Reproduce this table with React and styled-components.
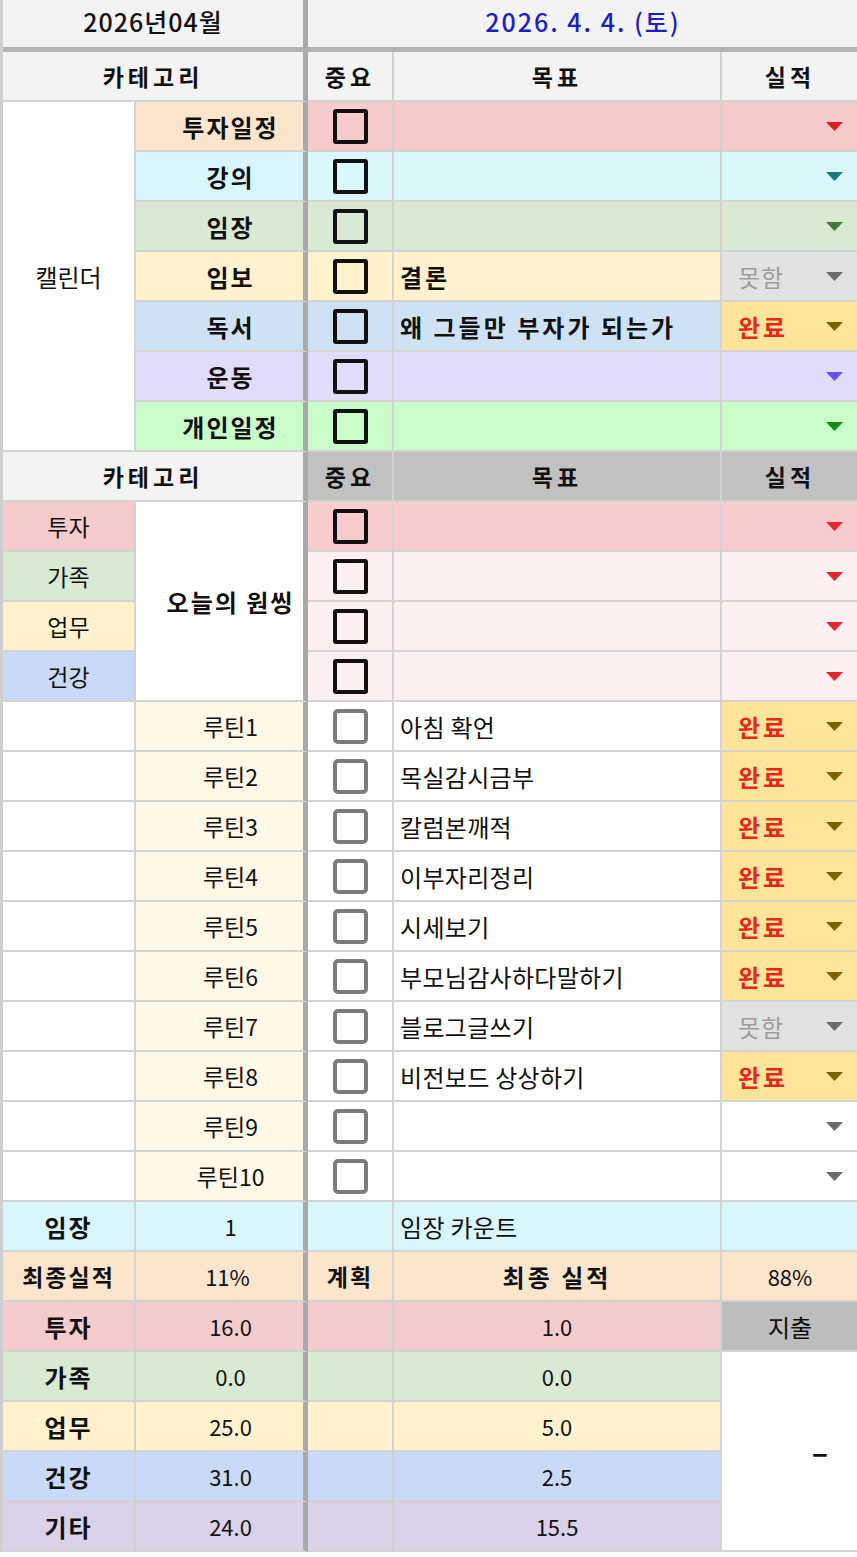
import React from "react";
import styled, { createGlobalStyle } from "styled-components";

const GlobalStyle = createGlobalStyle`
  body {
    margin: 0;
    background: #fff;
    font-family: "Noto Sans CJK KR", "Noto Sans", sans-serif;
    color: #111;
  }
`;

const LINE = "#d3d3d3";
const THICK = "#a9a9a9";

const Sheet = styled.div`
  display: grid;
  grid-template-columns: 133px 172px 86px 328px 138px;
  grid-template-rows: 52px;
  grid-auto-rows: 50px;
  width: 857px;
  border-left: 3px solid #cfcfcf;
  box-sizing: border-box;
  overflow: hidden;
`;

const Cell = styled.div`
  grid-column: span ${(p) => p.$cols || 1};
  grid-row: span ${(p) => p.$rows || 1};
  display: flex;
  align-items: center;
  justify-content: ${(p) =>
    p.$align === "left" ? "flex-start" : p.$align === "right" ? "flex-end" : "center"};
  box-sizing: border-box;
  min-width: 0;
  background: ${(p) => p.$bg || "#fff"};
  border-right: ${(p) => (p.$thick ? `5px solid ${THICK}` : `2px solid ${LINE}`)};
  border-bottom: 2px solid ${LINE};
  font-size: 23px;
  font-weight: ${(p) => (p.$bold ? 700 : 400)};
  letter-spacing: ${(p) => (p.$bold ? "2px" : "0")};
  color: ${(p) => p.$color || "#111"};
  white-space: nowrap;
  overflow: hidden;
`;

const TopCell = styled(Cell)`
  border-bottom: 5px solid #b3b3b3;
  padding-bottom: 6px;
  font-weight: 500;
  font-size: 25px;
  letter-spacing: 1px;
`;

const HeadCell = styled(Cell)`
  background: ${(p) => (p.$dark ? "#c1c1c1" : "#f3f3f3")};
  font-weight: 700;
  letter-spacing: 4px;
`;

const LabelCell = styled(Cell)`
  padding-left: 22px;
  font-size: ${(p) => (p.$bold ? "24px" : "23px")};
`;

const TextCell = styled(Cell)`
  justify-content: flex-start;
  padding-left: 6px;
  font-size: 24px;
  letter-spacing: ${(p) => (p.$bold ? "3px" : "0.3px")};
`;

const NumCell = styled(Cell)`
  font-size: 22px;
  padding-left: ${(p) => p.$shift || 0}px;
`;

const StatusCell = styled(Cell)`
  justify-content: space-between;
  padding: 0 15px 0 16px;
`;

const StatusText = styled.span`
  font-size: 24px;
  font-weight: ${(p) => (p.$done ? 700 : 400)};
  letter-spacing: ${(p) => (p.$done ? "3px" : "1px")};
  color: ${(p) => (p.$done ? "#e8261c" : "#9d9d9d")};
`;

const Box = styled.span`
  width: 35px;
  height: 35px;
  box-sizing: border-box;
  border: ${(p) => (p.$soft ? "4px solid #7b7b7b" : "4px solid #111")};
  border-radius: ${(p) => (p.$soft ? "5px" : "3px")};
`;

const DateText = styled.span`
  color: #1d1dc6;
  letter-spacing: 2px;
`;

const Dash = styled.span`
  font-size: 30px;
  font-weight: 700;
`;

const Arrow = ({ color }) => (
  <svg width="17" height="9" viewBox="0 0 17 9" style={{ marginLeft: "auto" }}>
    <polygon points="0,0 17,0 8.5,9" fill={color} />
  </svg>
);

const Status = ({ bg, text, arrow }) => (
  <StatusCell $bg={bg}>
    {text ? <StatusText $done={text === "완료"}>{text}</StatusText> : <span />}
    <Arrow color={arrow} />
  </StatusCell>
);

const calendar = [
  { label: "투자일정", labelBg: "#fce5cd", bg: "#f8cbcb", arrow: "#e21c1c" },
  { label: "강의", labelBg: "#d8f6fb", bg: "#daf8fc", arrow: "#167a80" },
  { label: "임장", labelBg: "#d9ead3", bg: "#d9ead3", arrow: "#44793a" },
  { label: "임보", labelBg: "#fff2cc", bg: "#fff2cc", goal: "결론", status: "못함" },
  { label: "독서", labelBg: "#cfe2f3", bg: "#cfe2f3", goal: "왜 그들만 부자가 되는가", status: "완료" },
  { label: "운동", labelBg: "#e2dcfb", bg: "#e2dcfb", arrow: "#6a4ef2" },
  { label: "개인일정", labelBg: "#c9fcc9", bg: "#c9fcc9", arrow: "#138a13" },
];

const wishes = [
  { label: "투자", bg: "#f4cccc", rowBg: "#f8cccc" },
  { label: "가족", bg: "#d9ead3", rowBg: "#fef0f0" },
  { label: "업무", bg: "#fff2cc", rowBg: "#fef0f0" },
  { label: "건강", bg: "#c9daf8", rowBg: "#fef0f0" },
];

const routines = [
  { goal: "아침 확언", status: "완료" },
  { goal: "목실감시금부", status: "완료" },
  { goal: "칼럼본깨적", status: "완료" },
  { goal: "이부자리정리", status: "완료" },
  { goal: "시세보기", status: "완료" },
  { goal: "부모님감사하다말하기", status: "완료" },
  { goal: "블로그글쓰기", status: "못함" },
  { goal: "비전보드 상상하기", status: "완료" },
  { goal: "", status: "" },
  { goal: "", status: "" },
];

const stats = [
  { label: "가족", bg: "#d9ead3", plan: "0.0", result: "0.0" },
  { label: "업무", bg: "#fff2cc", plan: "25.0", result: "5.0" },
  { label: "건강", bg: "#c9daf8", plan: "31.0", result: "2.5" },
  { label: "기타", bg: "#d9d2e9", plan: "24.0", result: "15.5" },
];

const statusBg = (s) => (s === "완료" ? "#ffe599" : s === "못함" ? "#e2e2e2" : "#fff");
const statusArrow = (s) => (s === "완료" ? "#7f6000" : "#6b6b6b");

export default function App() {
  return (
    <>
      <GlobalStyle />
      <Sheet>
        <TopCell $cols={2} $thick $bg="#f3f3f3">2026년04월</TopCell>
        <TopCell $cols={3} $bg="#f3f3f3">
          <DateText>2026. 4. 4. (토)</DateText>
        </TopCell>

        <HeadCell $cols={2} $thick>카테고리</HeadCell>
        <HeadCell>중요</HeadCell>
        <HeadCell>목표</HeadCell>
        <HeadCell>실적</HeadCell>

        {calendar.map((row, i) => (
          <React.Fragment key={row.label}>
            {i === 0 && <Cell $rows={7} style={{ fontSize: 24 }}>캘린더</Cell>}
            <LabelCell $bold $thick $bg={row.labelBg}>{row.label}</LabelCell>
            <Cell $bg={row.bg}><Box /></Cell>
            <TextCell $bold $bg={row.bg}>{row.goal}</TextCell>
            {row.status ? (
              <Status bg={statusBg(row.status)} text={row.status} arrow={statusArrow(row.status)} />
            ) : (
              <Status bg={row.bg} arrow={row.arrow} />
            )}
          </React.Fragment>
        ))}

        <HeadCell $cols={2} $thick>카테고리</HeadCell>
        <HeadCell $dark>중요</HeadCell>
        <HeadCell $dark>목표</HeadCell>
        <HeadCell $dark>실적</HeadCell>

        {wishes.map((row, i) => (
          <React.Fragment key={row.label}>
            <Cell $bg={row.bg}>{row.label}</Cell>
            {i === 0 && (
              <LabelCell $rows={4} $thick $bold>오늘의 원씽</LabelCell>
            )}
            <Cell $bg={row.rowBg}><Box /></Cell>
            <TextCell $bg={row.rowBg} />
            <Status bg={row.rowBg} arrow="#e52530" />
          </React.Fragment>
        ))}

        {routines.map((row, i) => (
          <React.Fragment key={i}>
            <Cell />
            <LabelCell $thick $bg="#fef8e6">루틴{i + 1}</LabelCell>
            <Cell><Box $soft /></Cell>
            <TextCell>{row.goal}</TextCell>
            <Status bg={statusBg(row.status)} text={row.status} arrow={statusArrow(row.status)} />
          </React.Fragment>
        ))}

        <Cell $bold $bg="#d8f6fb" style={{ fontSize: 24 }}>임장</Cell>
        <NumCell $thick $shift={22} $bg="#d8f6fb">1</NumCell>
        <Cell $bg="#d8f6fb" />
        <TextCell $bg="#d8f6fb">임장 카운트</TextCell>
        <Cell $bg="#d8f6fb" />

        <Cell $bold $bg="#fce5cd">최종실적</Cell>
        <NumCell $thick $shift={16} $bg="#fce5cd">11%</NumCell>
        <Cell $bold $bg="#fce5cd">계획</Cell>
        <Cell $bold $bg="#fce5cd" style={{ fontSize: 24, letterSpacing: 3 }}>최종 실적</Cell>
        <NumCell $bg="#fce5cd">88%</NumCell>

        <Cell $bold $bg="#f4cccc" style={{ fontSize: 24 }}>투자</Cell>
        <NumCell $thick $shift={22} $bg="#f4cccc">16.0</NumCell>
        <Cell $bg="#f4cccc" />
        <NumCell $bg="#f4cccc">1.0</NumCell>
        <Cell $bg="#bdbdbd" style={{ fontSize: 24 }}>지출</Cell>

        {stats.map((row, i) => (
          <React.Fragment key={row.label}>
            <Cell $bold $bg={row.bg} style={{ fontSize: 24 }}>{row.label}</Cell>
            <NumCell $thick $shift={22} $bg={row.bg}>{row.plan}</NumCell>
            <Cell $bg={row.bg} />
            <NumCell $bg={row.bg}>{row.result}</NumCell>
            {i === 0 && (
              <Cell $rows={4} $align="right" style={{ paddingRight: 30 }}>
                <Dash>–</Dash>
              </Cell>
            )}
          </React.Fragment>
        ))}
      </Sheet>
    </>
  );
}
